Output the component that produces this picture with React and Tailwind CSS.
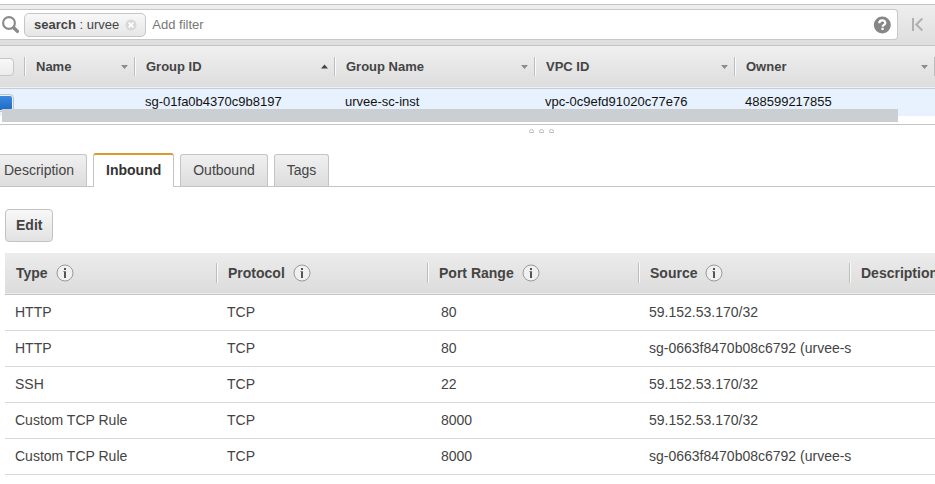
import { useState } from "react";

const groupColumns = [
  { label: "Name", sort: "none" },
  { label: "Group ID", sort: "up" },
  { label: "Group Name", sort: "none" },
  { label: "VPC ID", sort: "none" },
  { label: "Owner", sort: "none" },
];

const group = ["", "sg-01fa0b4370c9b8197", "urvee-sc-inst", "vpc-0c9efd91020c77e76", "488599217855"];

const tabs = ["Description", "Inbound", "Outbound", "Tags"];

const ruleColumns = ["Type", "Protocol", "Port Range", "Source", "Description"];

const rules = [
  ["HTTP", "TCP", "80", "59.152.53.170/32"],
  ["HTTP", "TCP", "80", "sg-0663f8470b08c6792 (urvee-s"],
  ["SSH", "TCP", "22", "59.152.53.170/32"],
  ["Custom TCP Rule", "TCP", "8000", "59.152.53.170/32"],
  ["Custom TCP Rule", "TCP", "8000", "sg-0663f8470b08c6792 (urvee-s"],
];

function SearchIcon() {
  return (
    <svg className="ml-0.5 size-[18px] shrink-0" viewBox="0 0 18 18" fill="none" stroke="#8a8a8a" aria-hidden="true">
      <circle cx="7" cy="7" r="5.9" strokeWidth="2.1" />
      <path d="M12 12 15.400 15.400" strokeWidth="3.4" strokeLinecap="round" />
    </svg>
  );
}

function SortArrow({ sort }) {
  return (
    <svg className="size-[7px] shrink-0" viewBox="0 0 7 7" aria-hidden="true">
      {sort === "up" ? <path d="M0 5.5 3.5 1.5 7 5.5z" fill="#444" /> : <path d="M0 2 7 2 3.5 6z" fill="#8c8c8c" />}
    </svg>
  );
}

function InfoButton({ label }) {
  return (
    <button type="button" aria-label={`About ${label}`} className="shrink-0">
      <svg className="block size-[18px]" viewBox="0 0 18 18" fill="none" aria-hidden="true">
        <circle cx="9" cy="9" r="8" fill="#f0f0f0" stroke="#9a9a9a" />
        <path d="M8 4h2v2H8zM7.4 7.200H10V14H8V8H7.400z" fill="#555" />
      </svg>
    </button>
  );
}

function FilterBar() {
  return (
    <div className="flex items-center border-t border-[#c4c4c4] bg-linear-to-b from-[#eeeeee] to-[#dedede] pb-[5px] pt-1">
      <div className="flex h-[31px] min-w-0 flex-1 items-center rounded-r border border-l-0 border-[#c8c8c8] bg-white pr-1.5">
        <SearchIcon />
        <span className="ml-1 flex h-6 shrink-0 items-center rounded-[5px] border border-[#c6c6c6] bg-linear-to-b from-[#f8f8f8] to-[#e6e6e6] pl-[9px] pr-2 text-[#444]">
          <span>
            <b>search</b> : urvee
          </span>
          <button type="button" aria-label="Remove filter" className="ml-1.5">
            <svg className="block size-3" viewBox="0 0 12 12" aria-hidden="true">
              <circle cx="6" cy="6" r="5.5" fill="#d8d8d8" />
              <path d="m3.7 3.7 4.6 4.6m0-4.6L3.7 8.3" stroke="#fff" strokeWidth="1.9" />
            </svg>
          </button>
        </span>
        <input
          type="text"
          aria-label="Add filter"
          placeholder="Add filter"
          className="ml-1.5 min-w-0 flex-1 bg-transparent outline-none placeholder:text-[#777]"
        />
        <button type="button" aria-label="Help">
          <svg className="block size-[18px]" viewBox="0 0 18 18" fill="none" aria-hidden="true">
            <circle cx="9.300" cy="9" r="8.5" fill="#868686" />
            <path d="M6.300 7.200C6.300 5.300 7.500 4.400 9.300 4.400s3 1 3 2.500c0 2-2.700 1.900-2.700 3.800" stroke="#fff" strokeWidth="2.200" />
            <path d="M8.400 11.800h2.300v2.200H8.400z" fill="#fff" />
          </svg>
        </button>
      </div>
      <button type="button" aria-label="First page" className="ml-3 mr-3">
        <svg className="block h-[15px] w-[13px]" viewBox="0 0 13 15" fill="none" stroke="#b0b0b0" strokeWidth="2" aria-hidden="true">
          <path d="M3 1v13M12.300 1.500 6.300 7.500 12.300 13.500" />
        </svg>
      </button>
    </div>
  );
}

function GroupTable() {
  return (
    <div className="relative overflow-hidden border-y border-[#c4c4c4] pb-2">
      <table className="w-full table-fixed border-collapse text-left">
        <colgroup>
          <col className="w-6" />
          <col className="w-[110px]" />
          <col className="w-[200px]" />
          <col className="w-[200px]" />
          <col className="w-[200px]" />
          <col className="w-[200px]" />
          <col />
        </colgroup>
        <thead>
          <tr className="h-[42px] border-b border-[#c6ccd2] bg-linear-to-b from-[#f0f0f0] to-[#dddddd] text-[#444]">
            <th className="p-0">
              <input
                type="checkbox"
                aria-label="Select all"
                className="-ml-1 block size-[18px] appearance-none rounded border border-[#c6c6c6] bg-linear-to-b from-[#f8f8f8] to-[#ececec]"
              />
            </th>
            {groupColumns.map((c) => (
              <th key={c.label} className="p-0">
                <div className="flex h-[19px] items-center justify-between border-l border-[#bdbdbd] pl-[11px] pr-1.5 shadow-[inset_1px_0_0_#fafafa]">
                  {c.label}
                  <SortArrow sort={c.sort} />
                </div>
              </th>
            ))}
            <td className="p-0">
              <div className="h-[19px] border-l border-[#bdbdbd]" />
            </td>
          </tr>
        </thead>
        <tbody>
          <tr className="h-7 bg-[#e8f2fe] text-[#111]">
            <td className="p-0 pt-[5px] align-top">
              <input
                type="checkbox"
                defaultChecked
                aria-label="Select urvee-sc-inst"
                className="-ml-1 block size-[18px] appearance-none rounded border border-[#bfc5cc] bg-white bg-linear-to-b from-[#3d8be0] to-[#1d68c4] bg-clip-content p-px"
              />
            </td>
            {group.map((value, i) => (
              <td key={i} className="overflow-hidden whitespace-nowrap p-0 pl-[11px]">
                {value}
              </td>
            ))}
            <td />
          </tr>
        </tbody>
      </table>
      <div className="absolute bottom-0.5 left-0.5 right-[37px] h-[13px] bg-[#cbcfd2]" />
    </div>
  );
}

function Splitter() {
  return (
    <div className="flex justify-center gap-[5px] py-1 pl-[148px]">
      {[0, 1, 2].map((n) => (
        <span key={n} className="h-1 w-[5px] rounded-t-sm border border-[#bdbdbd]" />
      ))}
    </div>
  );
}

function Tabs() {
  const [active, setActive] = useState("Inbound");
  return (
    <div role="tablist" className="-ml-[9px] mt-4 flex items-end gap-1.5 border-b border-[#c4c4c4]">
      {tabs.map((t) => (
        <button
          key={t}
          type="button"
          role="tab"
          aria-selected={t === active}
          onClick={() => setActive(t)}
          className={
            t === active
              ? "-mb-px h-[34px] rounded-t-[3px] border border-b-0 border-t-2 border-[#c4c4c4] border-t-[#dd9a2c] bg-white px-3 pb-0.5 font-bold text-[#333]"
              : "h-8 rounded-t-[3px] border border-b-0 border-[#c4c4c4] bg-linear-to-b from-[#f0f0f0] to-[#dddddd] px-3 pb-px text-[#444]"
          }
        >
          {t}
        </button>
      ))}
    </div>
  );
}

function RulesTable() {
  return (
    <table className="mt-[11px] w-full table-fixed border-collapse text-left text-[#444]">
      <colgroup>
        <col className="w-[211px]" />
        <col className="w-[211px]" />
        <col className="w-[211px]" />
        <col className="w-[211px]" />
        <col />
      </colgroup>
      <thead>
        <tr className="h-[41px] border-b border-[#c6c6c6] bg-linear-to-b from-[#ececec] to-[#dcdcdc]">
          {ruleColumns.map((label) => (
            <th key={label} className="group p-0">
              <div className="flex h-5 items-center gap-2 border-l border-[#bdbdbd] pl-[11px] shadow-[inset_1px_0_0_#fafafa] group-first:border-transparent group-first:pl-2.5 group-first:shadow-none">
                {label}
                {label !== "Description" && <InfoButton label={label} />}
              </div>
            </th>
          ))}
        </tr>
      </thead>
      <tbody>
        {rules.map((rule, i) => (
          <tr key={i} className="h-9 border-b border-[#d9d9d9]">
            {rule.map((value, j) => (
              <td key={j} className={`whitespace-nowrap p-0 ${j === 2 ? "pl-3.5" : "pl-[11px]"} first:pl-2.5`}>
                {value}
              </td>
            ))}
            <td />
          </tr>
        ))}
      </tbody>
    </table>
  );
}

export default function App() {
  return (
    <main className="overflow-hidden bg-white pt-1 font-['Liberation_Sans',Arial,sans-serif] text-[13px] leading-[18px]">
      <FilterBar />
      <GroupTable />
      <Splitter />
      <div className="text-sm">
        <Tabs />
        <section className="pl-[5px] pt-[22px]">
          <button
            type="button"
            className="h-[33px] rounded border border-[#c2c2c2] bg-linear-to-b from-[#f8f8f8] to-[#e2e2e2] px-2.5 pb-px font-bold text-[#444]"
          >
            Edit
          </button>
          <RulesTable />
        </section>
      </div>
    </main>
  );
}
